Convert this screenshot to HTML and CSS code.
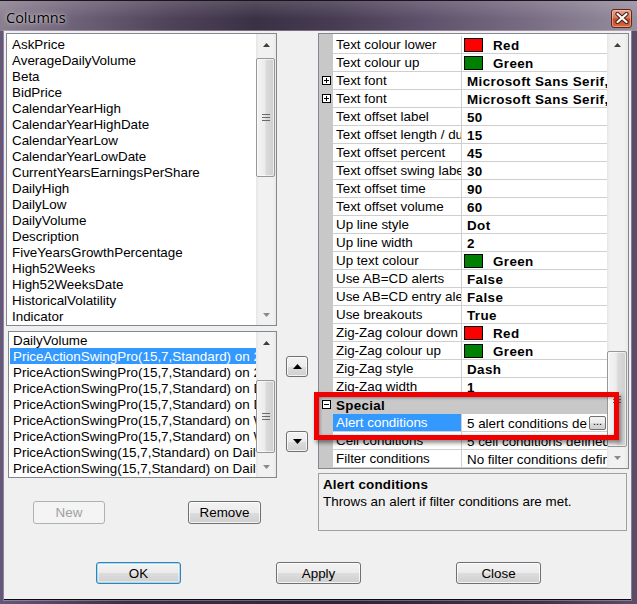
FILE: index.html
```html
<!DOCTYPE html>
<html lang="en">
<head>
    <meta charset="UTF-8">
    <meta name="viewport" content="width=device-width, initial-scale=1.0">
    <title>Columns</title>
    <link rel="stylesheet" href="styles.css">
</head>
<body>
    <div class="window">
        <header class="titlebar">
            <span class="title">Columns</span>
            <button class="close-btn" aria-label="Close">
                <svg width="14" height="12" viewBox="0 0 14 12">
                    <path d="M2.5 2 L11.5 10 M11.5 2 L2.5 10" stroke="#4a1a10" stroke-width="4.2" stroke-linecap="round"/>
                    <path d="M2.5 2 L11.5 10 M11.5 2 L2.5 10" stroke="#fff" stroke-width="2.2" stroke-linecap="round"/>
                </svg>
            </button>
        </header>

        <main class="client">
            <div class="content">
                <!-- available fields and chosen columns -->
                <section class="left-pane">
                    <div class="listbox available">
                        <ul class="items">
                            <li>AskPrice</li>
                            <li>AverageDailyVolume</li>
                            <li>Beta</li>
                            <li>BidPrice</li>
                            <li>CalendarYearHigh</li>
                            <li>CalendarYearHighDate</li>
                            <li>CalendarYearLow</li>
                            <li>CalendarYearLowDate</li>
                            <li>CurrentYearsEarningsPerShare</li>
                            <li>DailyHigh</li>
                            <li>DailyLow</li>
                            <li>DailyVolume</li>
                            <li>Description</li>
                            <li>FiveYearsGrowthPercentage</li>
                            <li>High52Weeks</li>
                            <li>High52WeeksDate</li>
                            <li>HistoricalVolatility</li>
                            <li>Indicator</li>
                        </ul>
                        <div class="vscroll">
                            <div class="sb-arrow"><svg width="7" height="4"><polygon points="0,4 3.5,0 7,4" fill="#3e3e3e"/></svg></div>
                            <div class="sb-track">
                                <div class="sb-thumb" style="top: 3px; height: 119px;">
                                    <svg width="8" height="7"><rect y="0" width="8" height="1" fill="#6a6a6a"/><rect y="3" width="8" height="1" fill="#6a6a6a"/><rect y="6" width="8" height="1" fill="#6a6a6a"/></svg>
                                </div>
                            </div>
                            <div class="sb-arrow"><svg width="7" height="4"><polygon points="0,0 7,0 3.5,4" fill="#8a8a8a"/></svg></div>
                        </div>
                    </div>

                    <div class="listbox chosen">
                        <ul class="items">
                            <li>DailyVolume</li>
                            <li class="selected">PriceActionSwingPro(15,7,Standard) on 2 Min</li>
                            <li>PriceActionSwingPro(15,7,Standard) on 2 Min</li>
                            <li>PriceActionSwingPro(15,7,Standard) on Daily</li>
                            <li>PriceActionSwingPro(15,7,Standard) on Daily</li>
                            <li>PriceActionSwingPro(15,7,Standard) on Weekly</li>
                            <li>PriceActionSwingPro(15,7,Standard) on Weekly</li>
                            <li>PriceActionSwing(15,7,Standard) on Daily</li>
                            <li>PriceActionSwing(15,7,Standard) on Daily</li>
                        </ul>
                        <div class="vscroll">
                            <div class="sb-arrow"><svg width="7" height="4"><polygon points="0,4 3.5,0 7,4" fill="#3e3e3e"/></svg></div>
                            <div class="sb-track">
                                <div class="sb-thumb" style="top: 27px; height: 73px;">
                                    <svg width="8" height="7"><rect y="0" width="8" height="1" fill="#6a6a6a"/><rect y="3" width="8" height="1" fill="#6a6a6a"/><rect y="6" width="8" height="1" fill="#6a6a6a"/></svg>
                                </div>
                            </div>
                            <div class="sb-arrow"><svg width="7" height="4"><polygon points="0,0 7,0 3.5,4" fill="#8a8a8a"/></svg></div>
                        </div>
                    </div>

                    <div class="list-actions">
                        <button class="btn btn-new" disabled>New</button>
                        <button class="btn btn-remove">Remove</button>
                    </div>
                </section>

                <section class="move-pane">
                    <button class="btn btn-move" aria-label="Move up">
                        <svg width="9" height="5"><polygon points="0,5 4.5,0 9,5" fill="#000"/></svg>
                    </button>
                    <button class="btn btn-move" aria-label="Move down">
                        <svg width="9" height="5"><polygon points="0,0 9,0 4.5,5" fill="#000"/></svg>
                    </button>
                </section>

                <!-- column settings -->
                <section class="right-pane">
                    <div class="propgrid">
                        <div class="pg-rows">
                            <div class="pg-row"><div class="pg-gutter"></div><div class="pg-name">Text colour lower</div><div class="pg-value"><span class="swatch red"></span>Red</div></div>
                            <div class="pg-row"><div class="pg-gutter"></div><div class="pg-name">Text colour up</div><div class="pg-value"><span class="swatch green"></span>Green</div></div>
                            <div class="pg-row"><div class="pg-gutter"><svg class="expander" width="9" height="9"><rect x="0.5" y="0.5" width="8" height="8" fill="#fff" stroke="#000"/><path d="M2 4.5h5M4.5 2v5" stroke="#000"/></svg></div><div class="pg-name">Text font</div><div class="pg-value">Microsoft Sans Serif, 8.25pt</div></div>
                            <div class="pg-row"><div class="pg-gutter"><svg class="expander" width="9" height="9"><rect x="0.5" y="0.5" width="8" height="8" fill="#fff" stroke="#000"/><path d="M2 4.5h5M4.5 2v5" stroke="#000"/></svg></div><div class="pg-name">Text font</div><div class="pg-value">Microsoft Sans Serif, 8.25pt</div></div>
                            <div class="pg-row"><div class="pg-gutter"></div><div class="pg-name">Text offset label</div><div class="pg-value">50</div></div>
                            <div class="pg-row"><div class="pg-gutter"></div><div class="pg-name">Text offset length / duration</div><div class="pg-value">15</div></div>
                            <div class="pg-row"><div class="pg-gutter"></div><div class="pg-name">Text offset percent</div><div class="pg-value">45</div></div>
                            <div class="pg-row"><div class="pg-gutter"></div><div class="pg-name">Text offset swing label</div><div class="pg-value">30</div></div>
                            <div class="pg-row"><div class="pg-gutter"></div><div class="pg-name">Text offset time</div><div class="pg-value">90</div></div>
                            <div class="pg-row"><div class="pg-gutter"></div><div class="pg-name">Text offset volume</div><div class="pg-value">60</div></div>
                            <div class="pg-row"><div class="pg-gutter"></div><div class="pg-name">Up line style</div><div class="pg-value">Dot</div></div>
                            <div class="pg-row"><div class="pg-gutter"></div><div class="pg-name">Up line width</div><div class="pg-value">2</div></div>
                            <div class="pg-row"><div class="pg-gutter"></div><div class="pg-name">Up text colour</div><div class="pg-value"><span class="swatch green"></span>Green</div></div>
                            <div class="pg-row"><div class="pg-gutter"></div><div class="pg-name">Use AB=CD alerts</div><div class="pg-value">False</div></div>
                            <div class="pg-row"><div class="pg-gutter"></div><div class="pg-name">Use AB=CD entry alerts</div><div class="pg-value">False</div></div>
                            <div class="pg-row"><div class="pg-gutter"></div><div class="pg-name">Use breakouts</div><div class="pg-value">True</div></div>
                            <div class="pg-row"><div class="pg-gutter"></div><div class="pg-name">Zig-Zag colour down</div><div class="pg-value"><span class="swatch red"></span>Red</div></div>
                            <div class="pg-row"><div class="pg-gutter"></div><div class="pg-name">Zig-Zag colour up</div><div class="pg-value"><span class="swatch green"></span>Green</div></div>
                            <div class="pg-row"><div class="pg-gutter"></div><div class="pg-name">Zig-Zag style</div><div class="pg-value">Dash</div></div>
                            <div class="pg-row"><div class="pg-gutter"></div><div class="pg-name">Zig-Zag width</div><div class="pg-value">1</div></div>
                            <div class="pg-row category"><div class="pg-gutter"><svg class="expander" width="9" height="9"><rect x="0.5" y="0.5" width="8" height="8" fill="#fff" stroke="#000"/><path d="M2 4.5h5" stroke="#000"/></svg></div><div class="pg-category">Special</div></div>
                            <div class="pg-row active"><div class="pg-gutter"></div><div class="pg-name">Alert conditions</div><div class="pg-value plain"><span class="pg-text">5 alert conditions defined</span><button class="ellipsis-btn">...</button></div></div>
                            <div class="pg-row"><div class="pg-gutter"></div><div class="pg-name">Cell conditions</div><div class="pg-value plain">5 cell conditions defined</div></div>
                            <div class="pg-row"><div class="pg-gutter"></div><div class="pg-name">Filter conditions</div><div class="pg-value plain">No filter conditions defined</div></div>
                        </div>
                        <div class="vscroll">
                            <div class="sb-arrow"><svg width="7" height="4"><polygon points="0,4 3.5,0 7,4" fill="#3e3e3e"/></svg></div>
                            <div class="sb-track">
                                <div class="sb-thumb" style="top: 296px; height: 96px;">
                                    <svg width="8" height="7"><rect y="0" width="8" height="1" fill="#6a6a6a"/><rect y="3" width="8" height="1" fill="#6a6a6a"/><rect y="6" width="8" height="1" fill="#6a6a6a"/></svg>
                                </div>
                            </div>
                            <div class="sb-arrow"><svg width="7" height="4"><polygon points="0,0 7,0 3.5,4" fill="#8a8a8a"/></svg></div>
                        </div>
                    </div>

                    <div class="desc">
                        <div class="desc-title">Alert conditions</div>
                        <div class="desc-text">Throws an alert if filter conditions are met.</div>
                    </div>

                    <!-- red marker drawn over the Special group -->
                    <div class="callout"></div>
                </section>
            </div>

            <footer class="dialog-buttons">
                <button class="btn btn-dialog btn-default">OK</button>
                <button class="btn btn-dialog">Apply</button>
                <button class="btn btn-dialog">Close</button>
            </footer>
        </main>
    </div>
</body>
</html>
```

FILE: styles.css
```css
* {
    box-sizing: border-box;
}

body {
    margin: 0;
    background-color: #2c2333;
    font-family: 'Liberation Sans', Arial, sans-serif;
    font-size: 13.4px;
    color: #000;
}

.window {
    width: 637px;
    height: 604px;
    display: flex;
    flex-direction: column;
    overflow: hidden;
    background: linear-gradient(90deg, #665878 0%, #3b2f47 20%, #2e2538 55%, #3f3349 85%, #5b4d68 100%);
}

/* Aero style caption */
.titlebar {
    height: 31px;
    flex: none;
    display: flex;
    align-items: center;
    padding: 0 5px 0 6px;
    border-top: 1px solid #1a141f;
    background:
        linear-gradient(180deg, rgba(255, 255, 255, 0.14), rgba(255, 255, 255, 0) 60%),
        linear-gradient(90deg, #8a7f90 0%, #6d6177 12%, #4e4259 27%, #3b3145 40%, #463b52 52%, #5d506a 66%, #7a6e85 84%, #978e9e 100%);
}

.title {
    font-family: 'Open Sans', 'Noto Sans', sans-serif;
    font-size: 14.5px;
    color: #000;
    text-shadow: 0 0 6px rgba(255, 255, 255, 0.75), 0 0 2px rgba(255, 255, 255, 0.6);
    margin-top: 2px;
}

.close-btn {
    margin-left: auto;
    margin-top: 4px;
    width: 21px;
    height: 19px;
    padding: 0;
    border: 1px solid #5e2519;
    border-radius: 3px;
    display: flex;
    align-items: center;
    justify-content: center;
    background: linear-gradient(180deg, #eaa792 0%, #d8775a 45%, #c44a28 55%, #d66a42 100%);
    box-shadow: inset 0 0 0 1px rgba(255, 220, 200, 0.45);
}

.client {
    flex: none;
    height: 569px;
    margin: 0 6px 0 4px;
    background-color: #f0f0f0;
    border-bottom: 1px solid #0e0a12;
    box-shadow: 0 0 0 1px rgba(220, 215, 225, 0.35);
}

.content {
    display: flex;
    padding: 2px 2px 0 2px;
}

/* left column: list boxes */
.left-pane {
    width: 271px;
    display: flex;
    flex-direction: column;
}

.listbox {
    display: flex;
    border: 1px solid #828790;
    background-color: #fff;
    overflow: hidden;
}

.listbox.available {
    height: 293px;
}

.listbox.chosen {
    height: 147px;
    margin: 5px 0 0 2px;
}

.items {
    flex: 1;
    min-width: 0;
    list-style: none;
    margin: 0;
    padding: 2px 0 0 0;
    overflow: hidden;
}

.items li {
    height: 16px;
    line-height: 17px;
    padding-left: 5px;
    white-space: nowrap;
    overflow: hidden;
}

.chosen .items {
    padding: 0 0 0 1px;
}

.chosen .items li {
    padding-left: 3px;
}

.items li.selected {
    background-color: #3399ff;
    color: #fff;
}

/* scroll bars */
.vscroll {
    width: 20px;
    flex: none;
    display: flex;
    flex-direction: column;
    background: linear-gradient(90deg, #e6e6e6 0, #f1f1f1 3px, #f1f1f1 17px, #e8e8e8 100%);
}

.propgrid .vscroll {
    width: 21px;
}

.sb-arrow {
    height: 21px;
    flex: none;
    display: flex;
    align-items: center;
    justify-content: center;
}

.sb-track {
    flex: 1;
    position: relative;
}

.sb-thumb {
    position: absolute;
    left: 0;
    right: 1px;
    border: 1px solid #979797;
    border-radius: 2px;
    display: flex;
    align-items: center;
    justify-content: center;
    background: linear-gradient(90deg, #f4f4f4 0%, #ececec 45%, #dadada 55%, #cfcfcf 100%);
    box-shadow: inset 0 0 0 1px rgba(255, 255, 255, 0.6);
}

/* win7 push buttons */
.btn {
    font-family: 'Liberation Sans', Arial, sans-serif;
    font-size: 13.4px;
    color: #000;
    padding: 0;
    border: 1px solid #707070;
    border-radius: 3px;
    background: linear-gradient(180deg, #f3f3f3 0%, #ebebeb 50%, #dddddd 51%, #cfcfcf 100%);
    box-shadow: inset 0 0 0 1px rgba(255, 255, 255, 0.75);
}

.btn:disabled {
    border-color: #adb2b5;
    background: #f4f4f4;
    color: #a0a0a0;
    box-shadow: none;
}

.list-actions {
    display: flex;
    gap: 83px;
    margin-top: 23px;
    padding-left: 27px;
}

.btn-new {
    width: 72px;
    height: 23px;
}

.btn-remove {
    width: 73px;
    height: 23px;
}

.move-pane {
    width: 41px;
    display: flex;
    flex-direction: column;
    gap: 54px;
    padding: 323px 0 0 9px;
}

.btn-move {
    width: 22px;
    height: 21px;
    display: flex;
    align-items: center;
    justify-content: center;
}

/* property grid */
.right-pane {
    width: 311px;
    display: flex;
    flex-direction: column;
    gap: 4px;
    position: relative;
}

.propgrid {
    height: 436px;
    display: flex;
    border: 1px solid #828790;
    background-color: #fff;
}

.pg-rows {
    width: 288px;
    padding-top: 2px;
    background: linear-gradient(90deg, #c8c8c8 14px, #fff 14px);
}

.pg-row {
    display: flex;
    height: 18px;
}

.pg-gutter {
    width: 14px;
    flex: none;
    display: flex;
    align-items: center;
    justify-content: center;
    background-color: #c8c8c8;
}

.expander {
    margin: 0 0 1px 1px;
}

.pg-name {
    width: 129px;
    flex: none;
    padding-left: 3px;
    line-height: 18px;
    white-space: nowrap;
    overflow: hidden;
    border-right: 1px solid #cfcfcf;
    border-bottom: 1px solid #cfcfcf;
}

.pg-value {
    width: 145px;
    flex: none;
    display: flex;
    align-items: center;
    padding: 1px 0 0 5px;
    font-weight: bold;
    letter-spacing: 0.4px;
    white-space: nowrap;
    overflow: hidden;
    border-bottom: 1px solid #cfcfcf;
}

.pg-value.plain {
    font-weight: normal;
    letter-spacing: 0;
}

.pg-text {
    flex: 1;
    min-width: 0;
    overflow: hidden;
}

.swatch {
    width: 19px;
    height: 14px;
    flex: none;
    border: 1px solid #000;
    margin: 0 10px 0 -3px;
}

.swatch.red {
    background-color: #ff0000;
}

.swatch.green {
    background-color: #008000;
}

.pg-row.category {
    background-color: #c8c8c8;
}

.pg-category {
    padding-left: 3px;
    font-weight: bold;
    letter-spacing: 0.3px;
    line-height: 19px;
}

.pg-row.active .pg-name {
    background-color: #3399ff;
    color: #fff;
}

.ellipsis-btn {
    width: 17px;
    height: 14px;
    flex: none;
    margin: 0 1px 0 2px;
    padding: 0 0 4px 0;
    font-family: 'Liberation Sans', Arial, sans-serif;
    font-size: 11px;
    line-height: 8px;
    border: 1px solid #707070;
    border-radius: 2px;
    background: linear-gradient(180deg, #f3f3f3 0%, #ebebeb 50%, #dddddd 51%, #cfcfcf 100%);
}

.desc {
    height: 58px;
    width: 309px;
    border: 1px solid #a0a0a0;
    padding: 2px 4px;
    line-height: 17px;
}

.desc-title {
    font-weight: bold;
    letter-spacing: 0.2px;
}

.callout {
    position: absolute;
    left: -4px;
    top: 359px;
    width: 305px;
    height: 48px;
    border: 5px solid #f00000;
    box-shadow: 2px 3px 4px rgba(0, 0, 0, 0.45), inset 1px 1px 3px rgba(0, 0, 0, 0.35);
}

/* OK / Apply / Close */
.dialog-buttons {
    display: flex;
    gap: 95px;
    padding: 31px 0 0 92px;
}

.btn-dialog {
    width: 85px;
    height: 22px;
}

.btn-default {
    border-color: #3c7fb1;
    box-shadow: inset 0 0 0 1px #9fdcf5, inset 0 0 0 2px rgba(255, 255, 255, 0.4);
}
```
